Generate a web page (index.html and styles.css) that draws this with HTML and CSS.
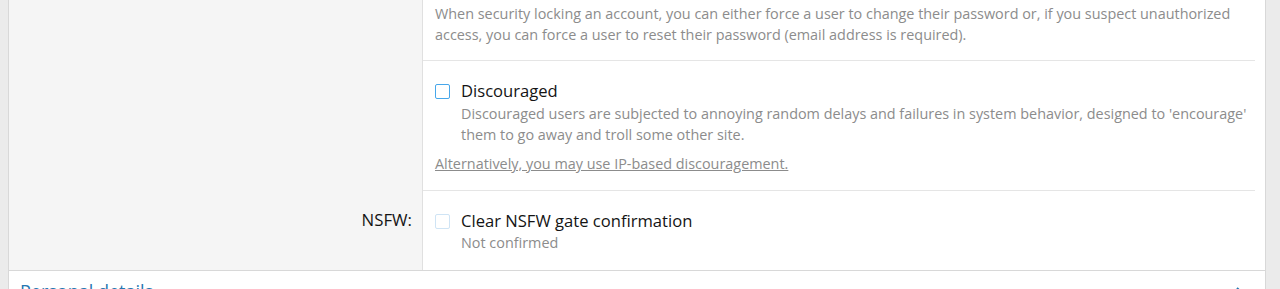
FILE: index.html
```html
<!DOCTYPE html>
<html>
<head>
<meta charset="utf-8">
<link rel="stylesheet" href="styles.css">
</head>
<body>
<div class="card">
  <div class="form-row">
    <div class="label"></div>
    <div class="content">
      <div class="item item-first">
        <p class="desc">When security locking an account, you can either force a user to change their password or, if you suspect unauthorized access, you can force a user to reset their password (email address is required).</p>
      </div>
      <div class="item item-check">
        <label class="check">
          <span class="box"></span>
          <span class="check-text">Discouraged</span>
        </label>
        <p class="desc indent">Discouraged users are subjected to annoying random delays and failures in system behavior, designed to 'encourage' them to go away and troll some other site.</p>
        <a class="alt-link" href="#">Alternatively, you may use IP-based discouragement.</a>
      </div>
    </div>
  </div>
  <div class="form-row">
    <div class="label"><span>NSFW:</span></div>
    <div class="content">
      <div class="item item-sep item-nsfw">
        <label class="check">
          <span class="box box-disabled"></span>
          <span class="check-text">Clear NSFW gate confirmation</span>
        </label>
        <p class="desc indent">Not confirmed</p>
      </div>
    </div>
  </div>
  <div class="block-header">
    <span class="header-title">Personal details</span>
    <svg class="chevron" width="10" height="16" viewBox="0 0 10 16"><path d="M2 2 L8 8 L2 14" fill="none" stroke="#2577b1" stroke-width="2"/></svg>
  </div>
</div>
</body>
</html>
```

FILE: styles.css
```css
html, body {
  margin: 0;
  padding: 0;
}
body {
  background: #ebebeb;
  font-family: "Open Sans", "Noto Sans", sans-serif;
  color: #141414;
  height: 289px;
  overflow: hidden;
}
.card {
  margin-left: 8px;
  width: 1256px;
  background: #fff;
  border-left: 1px solid #d8d8d8;
  border-right: 1px solid #d8d8d8;
}
.form-row {
  display: grid;
  grid-template-columns: 414px 1fr;
}
.label {
  background: #f5f5f5;
  border-right: 1px solid #e0e0e0;
  text-align: right;
  padding: 19px 10px 0 0;
  font-size: 16.8px;
  line-height: 21px;
}
.label span {
  display: block;
}
.content {
  padding-right: 10px;
}
.item {
  padding-left: 12px;
}
.item-first {
  padding-top: 3px;
  height: 57px;
}
.item-check {
  border-top: 1px solid #e5e5e5;
  padding-top: 19px;
  height: 110px;
}
.item-sep {
  border-top: 1px solid #e5e5e5;
}
.item-nsfw {
  padding-top: 19px;
  height: 60px;
}
.desc {
  margin: 0;
  font-size: 14.4px;
  line-height: 21px;
  color: #8c8c8c;
}
.item-check .desc {
  margin-top: 1px;
}
.indent {
  padding-left: 26px;
}
.check {
  display: flex;
  align-items: center;
  height: 22px;
}
.box {
  width: 13px;
  height: 13px;
  border: 1.5px solid #47a7eb;
  border-radius: 2px;
  margin-right: 11px;
  flex: none;
}
.box-disabled {
  border-color: #cfe4f5;
}
.check-text {
  font-size: 16.6px;
  line-height: 22px;
}
.alt-link {
  display: inline-block;
  margin-top: 8px;
  font-size: 14.4px;
  line-height: 21px;
  color: #8c8c8c;
}
.block-header {
  border-top: 1px solid #d8d8d8;
  display: flex;
  justify-content: space-between;
  align-items: flex-start;
  padding: 8px 20px 0 11px;
  height: 30px;
}
.header-title {
  font-size: 18px;
  line-height: 25px;
  color: #2577b1;
}
.chevron {
  margin-top: 7px;
}
```
